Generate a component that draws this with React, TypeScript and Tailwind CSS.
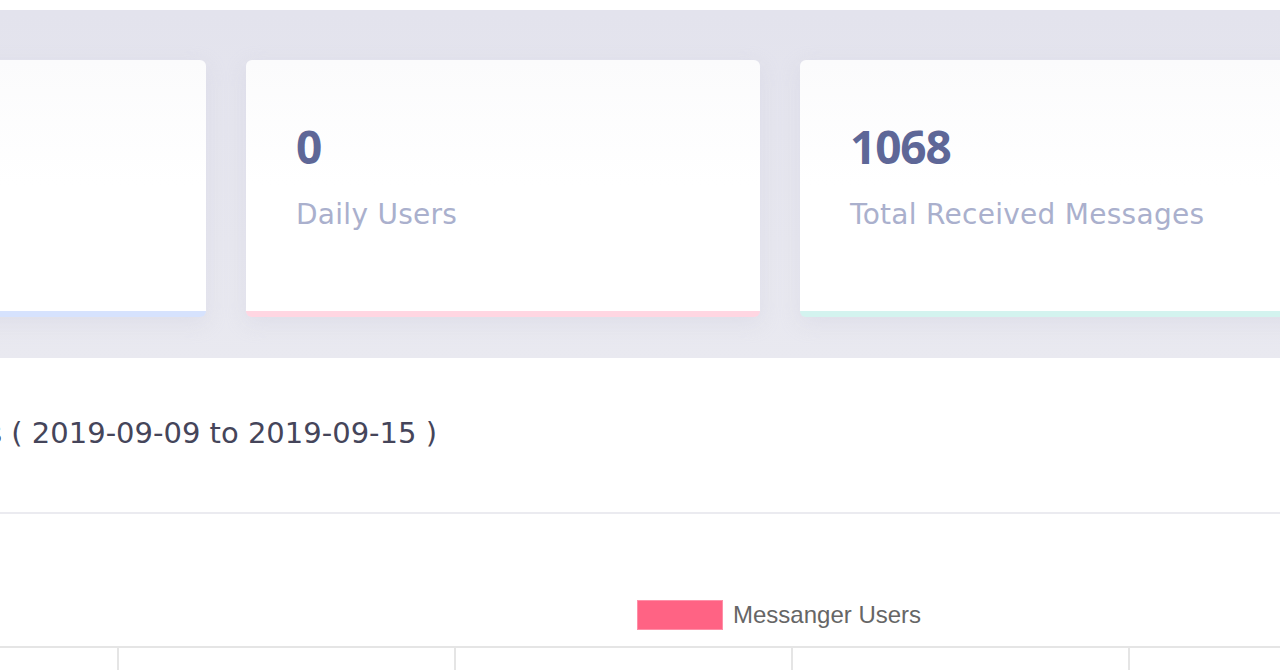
import React from 'react';

const stats = [
  { value: '14', label: 'Total Users', bar: 'border-b-[#d6e2fd]' },
  { value: '0', label: 'Daily Users', bar: 'border-b-[#ffd6e2]' },
  { value: '1068', label: 'Total Received Messages', bar: 'border-b-[#d3f3ef]' },
];

function StatCard({ value, label, bar }: { value: string; label: string; bar: string }) {
  return (
    <div
      className={`w-[514px] h-[257px] shrink-0 rounded-md bg-gradient-to-b from-[#fbfbfc] via-white to-white border-b-[6px] ${bar} shadow-[0_6px_20px_rgba(200,200,220,0.3)] pl-[50px] pt-[56px]`}
    >
      <div className="text-[46px] leading-[60px] font-bold text-[#5e6797] tracking-tight">{value}</div>
      <div className="mt-[19px] text-[28px] leading-[40px] text-[#aab0cd] font-['DejaVu_Sans',sans-serif] tracking-[0.01em]">
        {label}
      </div>
    </div>
  );
}

export default function App() {
  return (
    <main className="min-h-screen bg-white overflow-hidden font-['Noto_Sans',sans-serif]">
      <div className="h-[10px] bg-white" />

      {/* stat cards */}
      <section className="h-[348px] bg-gradient-to-b from-[#e3e3ed] to-[#e9e9f0] pt-[50px]">
        <div className="flex gap-10 ml-[-308px]">
          {stats.map((s) => (
            <StatCard key={s.label} {...s} />
          ))}
        </div>
      </section>

      {/* chart card */}
      <section className="bg-white">
        <div className="h-[154px] flex items-center">
          <div className="w-[437px] flex justify-end whitespace-nowrap pb-[2px]">
            <h2 className="text-[29px] text-[#45455a] font-['DejaVu_Sans',sans-serif]">
              Messenger Users ( 2019-09-09 to 2019-09-15 )
            </h2>
          </div>
        </div>
        <div className="h-[2px] bg-[#ebebf0]" />
        <div className="h-[83px]" />
        <div className="flex items-center ml-[637px] gap-[10px] font-['Liberation_Sans',sans-serif]">
          <div className="w-[86px] h-[30px] bg-[#ff6384] border border-[#ff8fa8]" />
          <span className="text-[24px] text-[#666666]">Messanger Users</span>
        </div>
        <div className="h-[13px]" />
        <div className="h-[2px] bg-[#e5e5e5]" />
        <div className="flex h-[40px]">
          <div className="w-[117px] shrink-0" />
          {[0, 1, 2, 3].map((i) => (
            <div key={i} className="w-[337px] shrink-0 border-l-2 border-[#e5e5e5]" />
          ))}
        </div>
      </section>
    </main>
  );
}
